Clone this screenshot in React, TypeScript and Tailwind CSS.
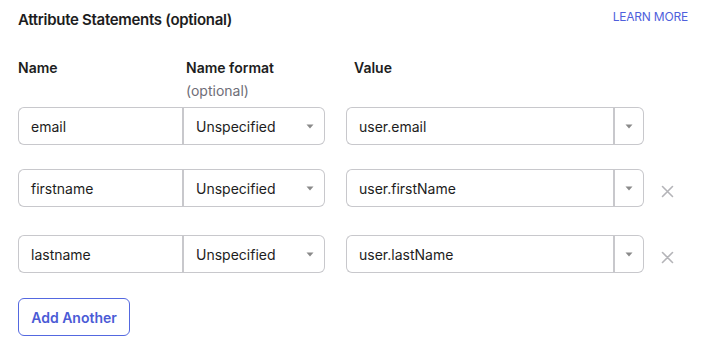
import React from "react";

const Caret = () => (
  <svg width="8" height="5" viewBox="0 0 8 5" className="shrink-0">
    <path d="M0.5 0.5 L7.5 0.5 L4 4.5 Z" fill="#8a8a8a" />
  </svg>
);

const XIcon = () => (
  <svg width="13" height="13" viewBox="0 0 13 13">
    <path d="M1.5 1.5 L11.5 11.5 M11.5 1.5 L1.5 11.5" stroke="#b4b4b8" strokeWidth="1.6" strokeLinecap="round" />
  </svg>
);

function Row({ name, value, removable, className }: { name: string; value: string; removable: boolean; className?: string }) {
  return (
    <div className={`flex items-center ${className ?? ""}`}>
      <div className="flex h-[38px] w-[307px]">
        <div className="flex w-[164px] items-center rounded-l-[6px] border border-r-0 border-[#c8c8cc] pl-[12px] text-[14px] text-[#1d1d21]">
          {name}
        </div>
        <div className="w-[2px] bg-[#c8c8cc]" />
        <div className="flex flex-1 items-center justify-between rounded-r-[6px] border border-l-0 border-[#c8c8cc] pl-[12px] pr-[10px] text-[14px] text-[#1d1d21]">
          <span>Unspecified</span>
          <Caret />
        </div>
      </div>
      <div className="ml-[21px] flex h-[38px] w-[298px]">
        <div className="flex flex-1 items-center rounded-l-[6px] border border-r-0 border-[#c8c8cc] pl-[12px] text-[14px] text-[#1d1d21]">
          {value}
        </div>
        <div className="w-[2px] bg-[#c8c8cc]" />
        <div className="flex w-[29px] items-center justify-center rounded-r-[6px] border border-l-0 border-[#c8c8cc]">
          <Caret />
        </div>
      </div>
      {removable && (
        <div className="ml-[17px] mt-[6px] flex items-center">
          <XIcon />
        </div>
      )}
    </div>
  );
}

export default function App() {
  return (
    <div className="h-[346px] w-[705px] bg-white pl-[18px] pr-[17px] text-[#1d1d21]" style={{ fontFamily: "Inter, 'Noto Sans', sans-serif" }}>
      <div className="flex h-[30px] items-start justify-between pt-[9px]">
        <h2 className="mt-[1px] text-[15px] font-semibold leading-[20px] tracking-[-0.3px]">Attribute Statements (optional)</h2>
        <a className="text-[12px] leading-[16px] tracking-[-0.2px] text-[#4f5fdc]">LEARN MORE</a>
      </div>
      <div className="mt-[28px] flex text-[14px] leading-[20px]">
        <div className="w-[168px] font-semibold">Name</div>
        <div className="w-[168px]">
          <div className="font-semibold">Name format</div>
          <div className="mt-[3px] text-[#6e6e78]">(optional)</div>
        </div>
        <div className="font-semibold">Value</div>
      </div>
      <Row className="mt-[6px]" name="email" value="user.email" removable={false} />
      <Row className="mt-[24px]" name="firstname" value="user.firstName" removable />
      <Row className="mt-[28px]" name="lastname" value="user.lastName" removable />
      <button className="mt-[25px] flex h-[38px] w-[112px] items-center justify-center rounded-[6px] border border-[#5468e0] text-[14px] font-semibold text-[#4b5bd6]">
        Add Another
      </button>
    </div>
  );
}
